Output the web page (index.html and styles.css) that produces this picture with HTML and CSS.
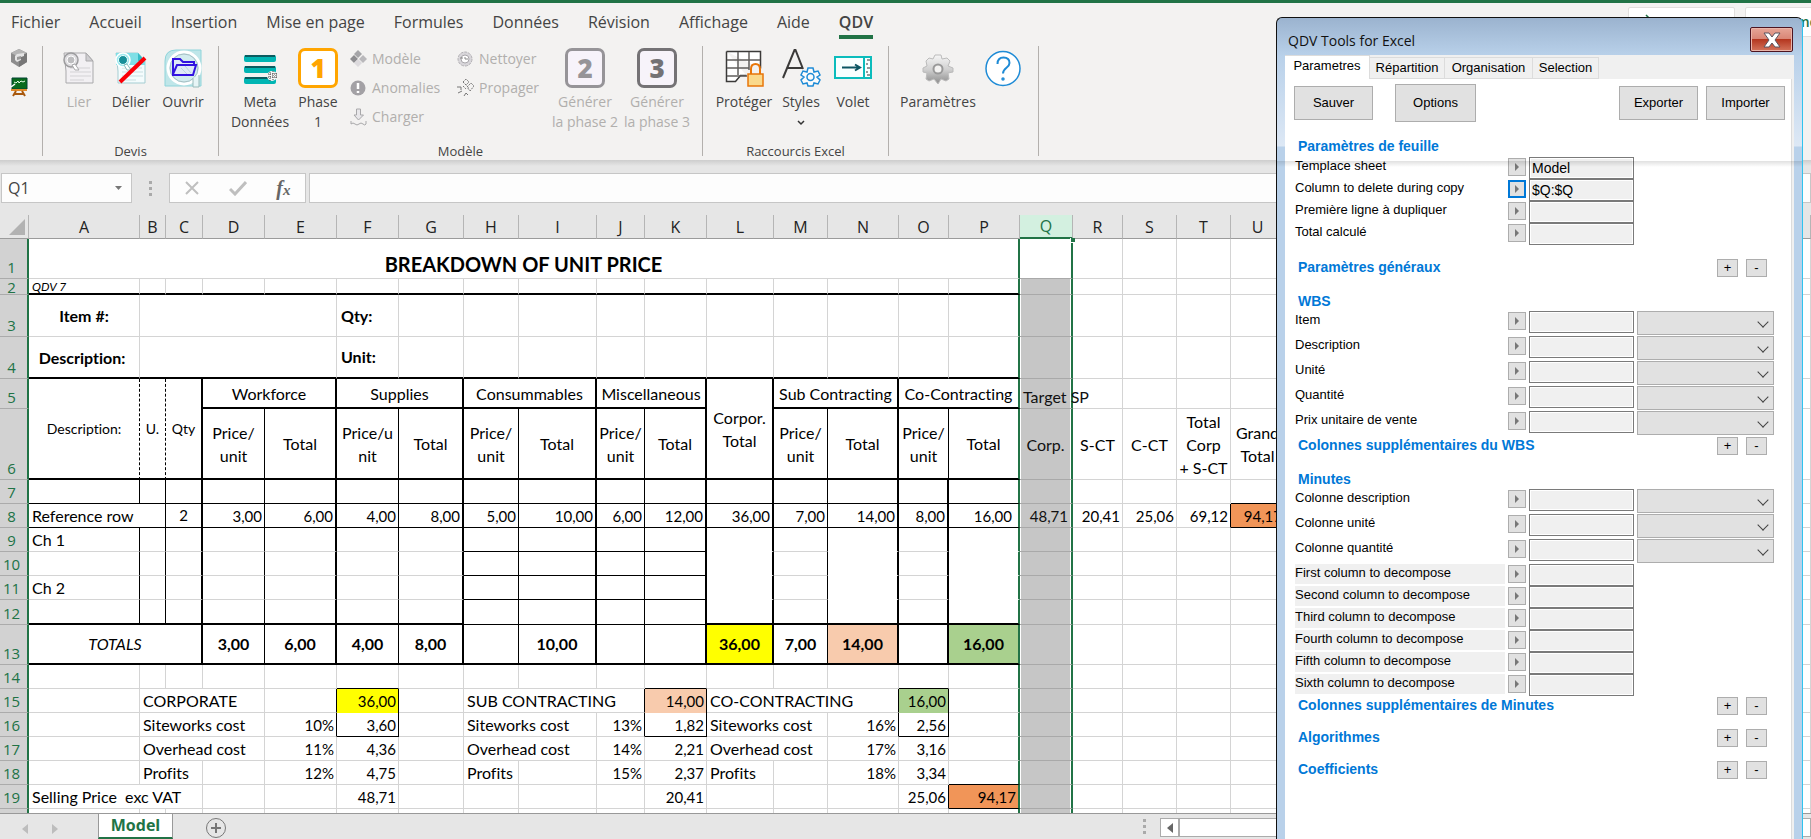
FILE: index.html
```html
<!DOCTYPE html>
<html lang="fr">
<head>
<meta charset="utf-8">
<title>QDV Tools for Excel</title>
<link rel="stylesheet" href="styles.css">
</head>
<body>
<header class="ribbon">
  <div class="ribbon-top">
    <nav class="tabs">
      <a href="#">Fichier</a><a href="#">Accueil</a><a href="#">Insertion</a><a href="#">Mise en page</a><a href="#">Formules</a><a href="#">Données</a><a href="#">Révision</a><a href="#">Affichage</a><a href="#">Aide</a><a href="#" class="current">QDV</a>
    </nav>
    <div class="share">
      <button type="button"><svg width="16" height="16" viewBox="0 0 16 16" fill="none" stroke="#217346" stroke-width="1.5"><path d="M2 6v8h12V9M4 10c0-4 3-5 7-5M8 1l4 4-4 4"/></svg>Partager</button>
      <button type="button"><svg width="16" height="16" viewBox="0 0 16 16" fill="none" stroke="#217346" stroke-width="1.5"><path d="M1 2h13v9H7l-3 3v-3H1z"/></svg>Commentaires</button>
    </div>
  </div>
  <div class="groups">
    <section class="group mini">
      <button type="button" aria-label="Cube"><svg width="18" height="20" viewBox="0 0 18 20"><path d="M9 1l8 4v9l-8 5-8-5V5z" fill="#8d8d8d"/><path d="M9 1l8 4-8 4-8-4z" fill="#b5b5b5"/><path d="M9 9l8-4v9l-8 5z" fill="#777"/><path d="M7 6l7-1v3l-3 1v3l-4 2-2-2V8z" fill="#e4e4e4"/><path d="M7 9l4-1v3l-4 1z" fill="#999"/></svg></button>
      <button type="button" aria-label="Tableau"><svg width="18" height="20" viewBox="0 0 18 20"><path d="M2 1h15v11H2z" fill="#0a6b1c" stroke="#043"/><path d="M4 5l2 1 2-2 1 2 2-2 2 1 2-1" stroke="#e8ffe8" fill="none"/><path d="M1 13h16" stroke="#e08a2b" stroke-width="2"/><path d="M6 14l-3 5M12 14l3 5M5 17h8" stroke="#a8590f" stroke-width="2"/><path d="M1 10l4-3" stroke="#fff" stroke-width="1.5"/></svg></button>
    </section>
    <section class="group devis">
      <div class="row">
        <button type="button" class="big w52 off"><svg width="32" height="34" viewBox="0 0 32 34"><path d="M1 2h22l7 8v22H3V20z" fill="#f2f0f3" stroke="#a9a9ab"/><path d="M23 2l7 8h-7z" fill="#cfced1" stroke="#a9a9ab"/><path d="M7 17h20M7 21h21M7 25h21M7 29h14" stroke="#d3d2d5"/><circle cx="8" cy="9" r="7" fill="#dddcdf" stroke="#9c9c9e" stroke-width="1.5"/><circle cx="8" cy="9" r="4" fill="#bdbdbf" stroke="#fff"/><path d="M9 14l3 5h4l-4-6z" fill="#fff" stroke="#a9a9ab"/></svg>Lier</button>
        <button type="button" class="big w52"><svg width="32" height="34" viewBox="0 0 32 34"><path d="M1 2h22l7 8v22H3V20z" fill="#f4fcfd" stroke="#a5cdd2"/><path d="M1 2h22l7 8v4H1z" fill="#7fdfe6"/><path d="M23 2l7 8h-7z" fill="#35bcc6"/><path d="M7 17h20M7 21h21M7 25h21M7 29h14" stroke="#c9dfe2"/><circle cx="8" cy="9" r="7" fill="#9eeaf0" stroke="#fff" stroke-width="1.5"/><circle cx="8" cy="9" r="4.500" fill="#178f99" stroke="#e8ffff"/><path d="M9 14l3 5h4l-4-6z" fill="#fff" stroke="#8bb"/><path d="M5 31L30 7" stroke="#fb0007" stroke-width="4"/></svg>Délier</button>
        <button type="button" class="big w52"><svg width="38" height="38" viewBox="0 0 38 38"><path d="M1 12Q1 1 12 1h25v36H1z" fill="#bfe6e9" stroke="#8fd4da"/><circle cx="20" cy="19" r="16" fill="none" stroke="#fff" stroke-width="3"/><circle cx="20" cy="19" r="14" fill="#d3ecef" stroke="#a7bfc3"/><path d="M29 29v9h6v-12" fill="#e6f5f6" stroke="#9bb"/><path d="M9 25V10h7l3 3h11v4M9 25l4-9h19l-3 10H9z" fill="#dfe9f8" stroke="#3213e0" stroke-width="2"/><path d="M17 19l6 6M21 17l6 7" stroke="#b9d8dc"/></svg>Ouvrir</button>
      </div>
      <h2>Devis</h2>
    </section>
    <section class="group modele">
      <div class="row">
        <button type="button" class="big w64"><svg width="36" height="34" viewBox="0 0 36 34"><g fill="#00b5b3"><rect x="2" y="4" width="32" height="7" rx="2"/><rect x="2" y="15" width="32" height="7" rx="2"/><rect x="2" y="26" width="32" height="7" rx="2"/></g><path d="M3 5h30M3 16h30M3 27h30" stroke="#0a5c60" stroke-width="2"/><circle cx="30" cy="25" r="5" fill="#f6f6f6"/><path d="M26 23h9M26 26h9M28 21v9M31 20v10M34 22v6" stroke="#444" stroke-dasharray="1 1"/></svg>Meta<br>Données</button>
        <button type="button" class="big w52"><span class="num n1">1</span>Phase<br>1</button>
        <div class="smalls c1">
          <button type="button"><svg width="17" height="18" viewBox="0 0 17 18"><path d="M8 0l4 4-4 4-4-4z" fill="#a5a5a8"/><path d="M4 5l4 4-4 4-4-4z" fill="#8d8d90"/><path d="M13 5l4 4-4 4-4-4z" fill="#b9b8bb"/><path d="M8 9l4 4-4 4-4-4z" fill="#dcdadd"/></svg>Modèle</button>
          <button type="button"><svg width="17" height="18" viewBox="0 0 17 18"><circle cx="8" cy="9" r="7.500" fill="#a3a1a5"/><path d="M8 4v6M8 12v2" stroke="#fff" stroke-width="2.500"/></svg>Anomalies</button>
          <button type="button"><svg width="17" height="18" viewBox="0 0 17 18" fill="none" stroke="#a8a8aa"><path d="M6.500 1h4v6h3L8.500 12 4 7h2.500z" fill="#e8e7ea"/><path d="M1 13v3q2-2 4 0t4 0 4 0 3 0v-3"/></svg>Charger</button>
        </div>
        <div class="smalls c2">
          <button type="button"><svg width="17" height="18" viewBox="0 0 17 18"><circle cx="8" cy="9" r="7" fill="#d8d6da" stroke="#b3b1b5" stroke-dasharray="3 1"/><circle cx="8" cy="9" r="4" fill="#fff" stroke="#a9a7ab"/><path d="M8 7v2h3M3 8h3" stroke="#888" fill="none"/></svg>Nettoyer</button>
          <button type="button"><svg width="17" height="18" viewBox="0 0 17 18" stroke="#777" fill="none"><path d="M6 3l3-3 3 3-3 3zM10 8l4-4 3 3-4 5zM6 7l3 3M8 5l4 4" stroke-dasharray="2 1"/><path d="M0 8h4v3M1 14l4-2M7 17l2-3 2 2"/></svg>Propager</button>
        </div>
        <button type="button" class="big w72 off"><span class="num n2">2</span>Générer<br>la phase 2</button>
        <button type="button" class="big w72 off"><span class="num n3">3</span>Générer<br>la phase 3</button>
      </div>
      <h2>Modèle</h2>
    </section>
    <section class="group raccourcis">
      <div class="row">
        <button type="button" class="big w64"><svg width="40" height="38" viewBox="0 0 40 38"><path d="M2.500 2.500h34v17M2.500 2.500v30h9l5-6h6" fill="#fff" stroke="#3b3a39" stroke-width="1.500"/><path d="M3 11h33M3 19h22M3 27h20M14 3v23M25 3v18" stroke="#605e5c" stroke-width="1.500"/><path d="M27 26v-6q0-5 4.500-5t4.500 5v6" fill="#f3f2f1" stroke="#e8760a" stroke-width="2"/><rect x="24" y="25" width="15" height="12" fill="#fad98b" stroke="#e8760a" stroke-width="1.500"/></svg>Protéger</button>
        <button type="button" class="big w50"><svg width="40" height="38" viewBox="0 0 40 38" fill="none"><path d="M2 29L13.500 1h1L22 20M6 19h15" stroke="#3b3a39" stroke-width="2"/><path d="M27 19h5l1 4 4-1 2 4-3 2 3 3-2 4-4-1-1 3h-5l-1-3-4 1-2-4 3-3-3-2 2-4 4 1z" fill="#fbfbfb" stroke="#1e8bd6" stroke-width="1.500"/><circle cx="29.500" cy="28" r="3.500" stroke="#1e8bd6" stroke-width="1.500"/></svg>Styles<br><svg width="10" height="8" viewBox="0 0 10 8" fill="none"><path d="M2 2l3 3 3-3" stroke="#333" stroke-width="1.500"/></svg></button>
        <button type="button" class="big w54"><svg width="38" height="38" viewBox="0 0 38 38" fill="none"><path d="M1 8h36v21H1z" fill="#f8ffff" stroke="#0bbcbc" stroke-width="2"/><path d="M30 8v21" stroke="#0bbcbc" stroke-width="2"/><path d="M8 18.500h17M21 15.500l5 3-5 3" stroke="#0b5563" stroke-width="2"/><path d="M33 11h3M32 15h2M33 19h3M32 23h2M33 26h3" stroke="#333"/></svg>Volet</button>
      </div>
      <h2>Raccourcis Excel</h2>
    </section>
    <section class="group params">
      <div class="row">
        <button type="button" class="big w90"><svg width="34" height="38" viewBox="0 0 34 38"><defs><linearGradient id="metal" x1="0" y1="0" x2="0" y2="1"><stop offset="0" stop-color="#f6f6f6"/><stop offset="0.5" stop-color="#d0d0d0"/><stop offset="1" stop-color="#8b8b8b"/></linearGradient></defs><path d="M14 6h6l1 4 5-1 3 3-2 5 5 2v4l-5 1 1 6-3 2-5-2-3 5-4-5-5 2-3-2 1-6-4-1v-4l4-2-1-5 3-3 4 1z" fill="url(#metal)" stroke="#bbb"/><circle cx="17" cy="20" r="4.500" fill="#f3f2f1" stroke="#999" stroke-width="2"/></svg>Paramètres</button>
        <button type="button" class="big w40" aria-label="Aide"><svg width="38" height="38" viewBox="0 0 38 38" fill="none" stroke="#1e8bd6"><circle cx="19" cy="19.500" r="17" fill="#fff" stroke-width="1.500"/><path d="M13.500 15q0-6.500 6-6.500t6 5.500c0 5-6.500 4.500-6.500 10.500" stroke-width="2"/><circle cx="19" cy="30" r="1" stroke-width="1.500"/></svg></button>
      </div>
    </section>
  </div>
</header>

<div class="formula-bar">
  <label class="name-box"><input type="text" value="Q1" aria-label="Zone Nom"><svg width="9" height="6" viewBox="0 0 9 6"><path d="M1 1h7L4.500 5z" fill="#777"/></svg></label>
  <span class="grip"><i></i><i></i><i></i></span>
  <div class="fx">
    <button type="button" aria-label="Annuler"><svg width="16" height="16" viewBox="0 0 16 16" stroke="#bfbfbf" stroke-width="2" fill="none"><path d="M2 2l12 12M14 2L2 14"/></svg></button>
    <button type="button" aria-label="Entrer"><svg width="18" height="16" viewBox="0 0 18 16" stroke="#bfbfbf" stroke-width="3" fill="none"><path d="M1 9l5 5L17 2"/></svg></button>
    <button type="button" class="fxb"><i>f</i><sub>x</sub></button>
  </div>
  <input class="formula" type="text" aria-label="Barre de formule">
</div>

<main class="sheet">
<table>
<colgroup><col class="c29"><col class="ca"><col class="cb"><col class="cc"><col class="cd"><col class="ce"><col class="cd"><col class="cg"><col class="ch"><col class="ci"><col class="cj"><col class="cd"><col class="cl"><col class="cm"><col class="cn"><col class="co"><col class="cn"><col class="cq"><col class="cr"><col class="cm"><col class="cm"><col class="cm"><col></colgroup>
<thead><tr><th class="corner"><svg width="16" height="16" viewBox="0 0 16 16"><path d="M16 0v16H0z" fill="#b2b2b2"/></svg></th><th>A</th><th>B</th><th>C</th><th>D</th><th>E</th><th>F</th><th>G</th><th>H</th><th>I</th><th>J</th><th>K</th><th>L</th><th>M</th><th>N</th><th>O</th><th>P</th><th class="sel">Q</th><th>R</th><th>S</th><th>T</th><th>U</th><th></th></tr></thead>
<tbody>
<tr class="h40"><th>1</th><td colspan="16" class="title">BREAKDOWN OF UNIT PRICE</td><td class="active"><span class="handle"></span></td><td></td><td></td><td></td><td></td><td></td></tr>
<tr class="h16 rule2"><th>2</th><td class="version">QDV 7</td><td></td><td></td><td></td><td></td><td></td><td></td><td></td><td></td><td></td><td></td><td></td><td></td><td></td><td></td><td></td><td></td><td></td><td></td><td></td><td></td><td></td></tr>
<tr class="h42"><th>3</th><td class="c b">Item #:</td><td colspan="4"></td><td class="b mid">Qty:</td><td></td><td></td><td></td><td></td><td></td><td></td><td></td><td></td><td></td><td></td><td></td><td></td><td></td><td></td><td></td><td></td></tr>
<tr class="h42 rule2"><th>4</th><td class="c b pull">Description:</td><td colspan="4"></td><td class="b mid">Unit:</td><td></td><td></td><td></td><td></td><td></td><td></td><td></td><td></td><td></td><td></td><td></td><td></td><td></td><td></td><td></td><td></td></tr>
<tr class="h30 rule2"><th>5</th><td rowspan="2" class="c small dash">Description:</td><td rowspan="2" class="c small dash">U.</td><td rowspan="2" class="c small r2">Qty</td><td colspan="2" class="c r2">Workforce</td><td colspan="2" class="c r2">Supplies</td><td colspan="2" class="c r2">Consummables</td><td colspan="2" class="c r2">Miscellaneous</td><td rowspan="2" class="c r2">Corpor.<br>Total</td><td colspan="2" class="c r2">Sub Contracting</td><td colspan="2" class="c">Co-Contracting</td><td>Target SP</td><td></td><td></td><td></td><td></td><td></td></tr>
<tr class="h71 rule2"><th>6</th><td class="c r1">Price/<br>unit</td><td class="c r2">Total</td><td class="c r1">Price/u<br>nit</td><td class="c r2">Total</td><td class="c r1">Price/<br>unit</td><td class="c r2">Total</td><td class="c r1">Price/<br>unit</td><td class="c r2">Total</td><td class="c r1">Price/<br>unit</td><td class="c r2">Total</td><td class="c r1">Price/<br>unit</td><td class="c">Total</td><td class="c">Corp.</td><td class="c">S-CT</td><td class="c">C-CT</td><td class="c">Total<br>Corp<br>+ S-CT</td><td class="c">Grand<br>Total</td><td></td></tr>
<tr class="grid rule1"><th>7</th><td></td><td></td><td></td><td></td><td></td><td></td><td></td><td></td><td></td><td></td><td></td><td></td><td></td><td></td><td></td><td></td><td></td><td></td><td></td><td></td><td class="b1"></td><td></td></tr>
<tr class="grid rule1 nums"><th>8</th><td colspan="2" class="l r1">Reference row</td><td class="c">2</td><td>3,00</td><td>6,00</td><td>4,00</td><td>8,00</td><td>5,00</td><td>10,00</td><td>6,00</td><td>12,00</td><td>36,00</td><td>7,00</td><td>14,00</td><td>8,00</td><td class="indent">16,00</td><td>48,71</td><td>20,41</td><td>25,06</td><td class="r1">69,12</td><td class="orange b1">94,17</td><td></td></tr>
<tr class="grid open"><th>9</th><td>Ch 1</td><td></td><td></td><td></td><td></td><td></td><td></td><td></td><td></td><td></td><td></td><td></td><td></td><td></td><td></td><td></td><td></td><td></td><td></td><td></td><td></td><td></td></tr>
<tr class="grid open"><th>10</th><td></td><td></td><td></td><td></td><td></td><td></td><td></td><td></td><td></td><td></td><td></td><td></td><td></td><td></td><td></td><td></td><td></td><td></td><td></td><td></td><td></td><td></td></tr>
<tr class="grid open"><th>11</th><td>Ch 2</td><td></td><td></td><td></td><td></td><td></td><td></td><td></td><td></td><td></td><td></td><td></td><td></td><td></td><td></td><td></td><td></td><td></td><td></td><td></td><td></td><td></td></tr>
<tr class="grid rule2 h25"><th>12</th><td></td><td></td><td></td><td></td><td></td><td></td><td></td><td class="b1"></td><td class="b1"></td><td class="b1"></td><td class="b1"></td><td></td><td></td><td></td><td></td><td></td><td></td><td></td><td></td><td></td><td></td><td></td></tr>
<tr class="grid rule2 h40 totals"><th>13</th><td colspan="3" class="r2"><em>TOTALS</em></td><td>3,00</td><td>6,00</td><td>4,00</td><td>8,00</td><td></td><td>10,00</td><td></td><td></td><td class="yellow">36,00</td><td>7,00</td><td class="peach">14,00</td><td></td><td class="green">16,00</td><td></td><td></td><td></td><td></td><td></td><td></td></tr>
<tr><th>14</th><td></td><td></td><td></td><td></td><td></td><td class="b1"></td><td></td><td></td><td></td><td></td><td class="b1"></td><td></td><td></td><td></td><td class="b1"></td><td></td><td></td><td></td><td></td><td></td><td></td><td></td></tr>
<tr class="nums"><th>15</th><td></td><td colspan="3" class="l">CORPORATE</td><td class="r1"></td><td class="yellow box">36,00</td><td></td><td colspan="3" class="l r1">SUB CONTRACTING</td><td class="peach box">14,00</td><td colspan="3" class="l r1">CO-CONTRACTING</td><td class="green box">16,00</td><td></td><td></td><td></td><td></td><td></td><td></td><td></td></tr>
<tr class="nums"><th>16</th><td></td><td colspan="3" class="l">Siteworks cost</td><td class="r1">10%</td><td class="r1 b1">3,60</td><td></td><td colspan="2" class="l">Siteworks cost</td><td class="r1">13%</td><td class="r1 b1">1,82</td><td colspan="2" class="l">Siteworks cost</td><td class="r1">16%</td><td class="r1 b1">2,56</td><td></td><td></td><td></td><td></td><td></td><td></td><td></td></tr>
<tr class="nums"><th>17</th><td></td><td colspan="3" class="l">Overhead cost</td><td>11%</td><td>4,36</td><td></td><td colspan="2" class="l">Overhead cost</td><td>14%</td><td>2,21</td><td colspan="2" class="l">Overhead cost</td><td>17%</td><td>3,16</td><td></td><td></td><td></td><td></td><td></td><td></td><td></td></tr>
<tr class="nums"><th>18</th><td></td><td colspan="2" class="l">Profits</td><td></td><td>12%</td><td>4,75</td><td></td><td class="l">Profits</td><td></td><td>15%</td><td>2,37</td><td class="l">Profits</td><td></td><td>18%</td><td>3,34</td><td class="b1"></td><td></td><td></td><td></td><td></td><td></td><td></td></tr>
<tr class="nums"><th>19</th><td colspan="3" class="l pre">Selling Price  exc VAT</td><td></td><td></td><td>48,71</td><td></td><td></td><td></td><td></td><td>20,41</td><td></td><td></td><td></td><td class="r1">25,06</td><td class="orange b1">94,17</td><td></td><td></td><td></td><td></td><td></td><td></td></tr>
<tr><th></th><td></td><td></td><td></td><td></td><td></td><td></td><td></td><td></td><td></td><td></td><td></td><td></td><td></td><td></td><td></td><td></td><td></td><td></td><td></td><td></td><td></td><td></td></tr>
</tbody>
</table>
</main>

<footer class="sheet-tabs">
  <button type="button" class="nav" aria-label="Précédent"><svg width="6" height="10" viewBox="0 0 6 10"><path d="M6 0v10L0 5z" fill="#bdbdbd"/></svg></button>
  <button type="button" class="nav" aria-label="Suivant"><svg width="6" height="10" viewBox="0 0 6 10"><path d="M0 0v10l6-5z" fill="#bdbdbd"/></svg></button>
  <button type="button" class="tab">Model</button>
  <button type="button" class="add" aria-label="Nouvelle feuille"><svg width="22" height="22" viewBox="0 0 22 22" fill="none" stroke="#777"><circle cx="11" cy="11" r="9.500"/><path d="M11 6v10M6 11h10" stroke-width="2"/></svg></button>
  <span class="grip"><i></i><i></i><i></i></span>
  <div class="scroll"><button type="button" aria-label="Défiler à gauche"><svg width="6" height="10" viewBox="0 0 6 10"><path d="M6 0v10L0 5z" fill="#666"/></svg></button></div>
</footer>

<aside class="dialog">
  <div class="caption"><h1>QDV Tools for Excel</h1><button type="button" aria-label="Fermer"><svg width="18" height="16" viewBox="0 0 18 16"><path d="M1 1h5l3 4 3-4h5l-5 7 5 7h-5l-3-4-3 4H1l5-7z" fill="#fff" stroke="#5a5560"/></svg></button></div>
  <div class="client">
    <div class="dtabs"><button type="button" class="on">Parametres</button><button type="button">Répartition</button><button type="button">Organisation</button><button type="button">Selection</button></div>
    <form class="page">
      <div class="actions"><button type="button">Sauver</button><button type="button" class="large">Options</button><span class="fill"></span><button type="button">Exporter</button><button type="button">Importer</button></div>

      <div class="head first"><h3>Paramètres de feuille</h3></div>
      <div class="line"><label for="f1">Templace sheet</label><button type="button" aria-label="Choisir"></button><input id="f1" type="text" value="Model"></div>
      <div class="line"><label for="f2">Column to delete during copy</label><button type="button" class="focus" aria-label="Choisir"></button><input id="f2" type="text" value="$Q:$Q"></div>
      <div class="line"><label for="f3">Première ligne à dupliquer</label><button type="button" aria-label="Choisir"></button><input id="f3" type="text"></div>
      <div class="line"><label for="f4">Total calculé</label><button type="button" aria-label="Choisir"></button><input id="f4" type="text"></div>

      <div class="head gap14"><h3>Paramètres généraux</h3><button type="button">+</button><button type="button">-</button></div>

      <div class="head gap16"><h3>WBS</h3></div>
      <div class="line tall"><label for="w1">Item</label><button type="button" aria-label="Choisir"></button><input id="w1" type="text"><span class="pick"><select aria-label="Item"></select></span></div>
      <div class="line tall"><label for="w2">Description</label><button type="button" aria-label="Choisir"></button><input id="w2" type="text"><span class="pick"><select aria-label="Description"></select></span></div>
      <div class="line tall"><label for="w3">Unité</label><button type="button" aria-label="Choisir"></button><input id="w3" type="text"><span class="pick"><select aria-label="Unité"></select></span></div>
      <div class="line tall"><label for="w4">Quantité</label><button type="button" aria-label="Choisir"></button><input id="w4" type="text"><span class="pick"><select aria-label="Quantité"></select></span></div>
      <div class="line tall"><label for="w5">Prix unitaire de vente</label><button type="button" aria-label="Choisir"></button><input id="w5" type="text"><span class="pick"><select aria-label="Prix unitaire de vente"></select></span></div>
      <div class="head"><h3>Colonnes supplémentaires du WBS</h3><button type="button">+</button><button type="button">-</button></div>

      <div class="head gap16"><h3>Minutes</h3></div>
      <div class="line tall"><label for="m1">Colonne description</label><button type="button" aria-label="Choisir"></button><input id="m1" type="text"><span class="pick"><select aria-label="Colonne description"></select></span></div>
      <div class="line tall"><label for="m2">Colonne unité</label><button type="button" aria-label="Choisir"></button><input id="m2" type="text"><span class="pick"><select aria-label="Colonne unité"></select></span></div>
      <div class="line tall"><label for="m3">Colonne quantité</label><button type="button" aria-label="Choisir"></button><input id="m3" type="text"><span class="pick"><select aria-label="Colonne quantité"></select></span></div>
      <div class="line shade"><label for="d1">First column to decompose</label><button type="button" aria-label="Choisir"></button><input id="d1" type="text"></div>
      <div class="line shade"><label for="d2">Second column to decompose</label><button type="button" aria-label="Choisir"></button><input id="d2" type="text"></div>
      <div class="line shade"><label for="d3">Third column to decompose</label><button type="button" aria-label="Choisir"></button><input id="d3" type="text"></div>
      <div class="line shade"><label for="d4">Fourth column to decompose</label><button type="button" aria-label="Choisir"></button><input id="d4" type="text"></div>
      <div class="line shade"><label for="d5">Fifth column to decompose</label><button type="button" aria-label="Choisir"></button><input id="d5" type="text"></div>
      <div class="line shade"><label for="d6">Sixth column to decompose</label><button type="button" aria-label="Choisir"></button><input id="d6" type="text"></div>
      <div class="head"><h3>Colonnes supplémentaires de Minutes</h3><button type="button">+</button><button type="button">-</button></div>
      <div class="head gap14"><h3>Algorithmes</h3><button type="button">+</button><button type="button">-</button></div>
      <div class="head gap14"><h3>Coefficients</h3><button type="button">+</button><button type="button">-</button></div>
    </form>
  </div>
  <div class="veil"></div>
</aside>
</body>
</html>
```
FILE: styles.css
```css
* { box-sizing: border-box; }
body {
  margin: 0;
  min-height: 100vh;
  height: 100vh;
  display: flex;
  flex-direction: column;
  position: relative;
  overflow: hidden;
  background: #e6e6e6;
  color: #444;
  font: 16px/20px "Open Sans", "Noto Sans", sans-serif;
}
button, input, select { font: inherit; color: inherit; margin: 0; border-radius: 0; }
button { padding: 0; border: 0; background: none; }
h1, h2, h3 { margin: 0; font-weight: normal; }

/* Ribbon */
.ribbon { border-top: 3px solid #217346; background: #f3f2f1; height: 160px; flex: none; }
.ribbon-top { display: flex; justify-content: space-between; height: 43px; overflow: hidden; }
.tabs { display: flex; gap: 29px; padding: 9px 0 0 11px; }
.tabs a { color: #444; text-decoration: none; height: 27px; white-space: nowrap; }
.tabs .current { font-weight: 600; border-bottom: 4px solid #217346; }
.share { display: flex; gap: 10px; padding-top: 4px; margin-right: -64px; }
.share button {
  display: flex; align-items: center; gap: 8px; width: 130px; height: 30px; padding: 0 9px;
  background: #fff; border: 1px solid #e1dfdd; border-radius: 2px; color: #217346; font-weight: 600; font-size: 14px;
}
.share button:first-child { width: 107px; }
.groups { display: flex; height: 110px; font-size: 14px; line-height: 20px; }
.group { display: flex; flex-direction: column; justify-content: space-between; border-right: 1px solid #b3b0ad; }
.group h2 { text-align: center; font-size: 13px; line-height: 10px; }
.row { display: flex; }
.mini { width: 43px; padding: 2px 0 0 10px; justify-content: flex-start; gap: 9px; align-items: flex-start; }
.mini svg { display: block; }
.devis { width: 176px; padding-left: 10px; }
.devis h2 { margin-left: -10px; }
.modele { width: 484px; padding-left: 9px; }
.modele h2 { margin-left: -9px; }
.raccourcis { width: 186px; padding-left: 9px; }
.raccourcis h2 { margin-left: -9px; }
.params { width: 150px; padding-left: 4px; }
.big { line-height: 20px; text-align: center; white-space: nowrap; padding-top: 2px; align-self: flex-start; }
.big > svg:first-child, .num { display: block; margin: 0 auto 4px; height: 40px; }
.big br + svg { display: inline-block; }
.off { color: #b1afad; }
.w40 { width: 40px; } .w50 { width: 50px; } .w52 { width: 52px; } .w54 { width: 54px; }
.w64 { width: 64px; } .w72 { width: 72px; } .w90 { width: 90px; }
.num {
  width: 40px; border: 3px solid; border-radius: 7px; background: #f7f3fa;
  font-size: 26px; line-height: 34px; font-weight: 800;
}
.n1 { color: #ffa500; background: #fff; }
.n2 { color: #969498; }
.n3 { color: #747275; }
.smalls { display: flex; flex-direction: column; gap: 9px; padding: 3px 0 0 6px; color: #b1afad; }
.smalls button { display: flex; align-items: center; gap: 5px; height: 20px; }
.c1 { width: 107px; }
.c2 { width: 98px; }

/* Formula bar */
.formula-bar {
  display: flex; flex: none; height: 55px; padding: 13px 0 12px 1px;
  background: linear-gradient(#cdcdcd, #e6e6e6 6px);
}
.name-box { display: flex; align-items: center; width: 131px; background: #fdfdfd; border: 1px solid #c6c6c6; padding: 0 8px 0 6px; }
.name-box input { flex: 1; min-width: 0; border: 0; background: none; padding: 0; }
.grip { display: flex; flex-direction: column; justify-content: center; gap: 3px; width: 37px; align-items: center; }
.grip i { width: 3px; height: 3px; background: #aaa; }
.fx { display: flex; align-items: center; justify-content: space-around; width: 137px; background: #fdfdfd; border: 1px solid #c6c6c6; }
.fx svg { display: block; }
.fxb { font: bold 20px/20px "Liberation Serif", serif; color: #666; }
.fxb sub { font-size: 15px; font-style: italic; line-height: 10px; vertical-align: baseline; }
.formula { flex: 1; margin-left: 3px; background: #fdfdfd; border: 1px solid #c6c6c6; }

/* Worksheet */
.sheet { flex: 1; min-height: 0; overflow: hidden; background: #fff; color: #000; }
table { table-layout: fixed; width: 100%; border-collapse: separate; border-spacing: 0; font: 16px/24px Lato, sans-serif; font-variant-ligatures: none; }
.c29 { width: 29px; } .ca { width: 111px; } .cb { width: 26px; } .cc { width: 37px; } .cd { width: 62px; }
.ce { width: 72px; } .cg { width: 65px; } .ch { width: 55px; } .ci { width: 78px; } .cj { width: 48px; }
.cl { width: 67px; } .cm { width: 54px; } .cn { width: 71px; } .co { width: 50px; } .cq { width: 53px; } .cr { width: 50px; }
thead th {
  height: 24px; padding: 0; background: #e6e6e6; border-bottom: 1px solid #9b9b9b; border-right: 1px solid #b5b5b5;
  font: 16px/20px "Open Sans", sans-serif; color: #222;
}
thead .sel { background: #d3f0e0; color: #217346; border-bottom: 2px solid #217346; }
.corner svg { display: block; margin: 0 0 0 9px; }
tbody th {
  padding: 0 4px 0 0; vertical-align: bottom; background: #d2d2d2; color: #217346;
  border-right: 2px solid #217346; border-bottom: 1px solid #ababab; font: 15px/22px "Open Sans", sans-serif;
}
td {
  height: 24px; padding: 0 3px; white-space: nowrap; vertical-align: bottom; line-height: 22px;
  border-right: 1px solid #d4d4d4; border-bottom: 1px solid #d4d4d4;
}
.h16 td { height: 16px; } .h25 td { height: 25px; } .h30 td { height: 30px; } .h40 td { height: 40px; }
.h42 td { height: 42px; } .h71 td { height: 71px; }
.h16 th { line-height: 14px; }
.rule1 td:not(:nth-last-child(-n+6)) { border-bottom-color: #000; }
.rule2 td:not(:nth-last-child(-n+6)) { border-bottom: 2px solid #000; }
td.c { text-align: center; vertical-align: middle; line-height: 23px; padding: 0; }
td.title { text-align: center; font-size: 20px; font-weight: bold; padding-bottom: 3px; }
td.version { font-size: 12px; line-height: 12px; font-style: italic; }
td.small { font-size: 14px; }
.b { font-weight: bold; }
td.mid { vertical-align: middle; padding-left: 4px; }
td.pull { padding-right: 4px; }
td.dash { border-right: 1px dashed #000; }
td.r1 { border-right: 1px solid #000; }
td.r2 { border-right: 2px solid #000; }
.nums td { text-align: right; font-size: 15px; padding: 0 2px; }
.nums td.l { text-align: left; font-size: 16px; padding: 0 3px; }
.nums td.c { text-align: center; }
.pre { white-space: pre; }
.nums td.indent { padding-right: 6px; }
.grid td:not(:nth-last-child(-n+6)) { border-right: 1px solid #000; }
.grid td:nth-last-child(9), .grid td:nth-last-child(8), .grid td:nth-last-child(11), .grid td:nth-last-child(12),
.grid td:nth-last-child(14), .grid td:nth-last-child(16), .grid td:nth-last-child(18), .grid td:nth-last-child(20) { border-right: 2px solid #000 !important; }
.open td:nth-last-child(n+12):nth-last-child(-n+15) { border-bottom-color: #000; }
.open td:nth-last-child(7), .open td:nth-last-child(9), .open td:nth-last-child(11) { border-bottom-color: #fff; }
.totals td { text-align: center; vertical-align: middle; font-weight: bold; }
.totals em { font-weight: normal; }
td.b1, .rule2 td.b1:not(:nth-last-child(-n+6)) { border-bottom: 1px solid #000; }
.yellow { background: #ff0; }
.peach { background: #f8cbad; }
.green { background: #a9d08e; }
.orange { background: #f19558; }
.nums td.box { border-right: 1px solid #000; border-bottom-width: 0; padding-bottom: 1px; }
tbody td:nth-last-child(7), .grid td:nth-last-child(7):not(:nth-last-child(-n+6)) { border-right: 2px solid #217346; }
tbody td:nth-last-child(6) {
  background: #c6c6c6; border-right: 2px solid #217346; border-bottom-color: #a9a9a9;
  box-shadow: inset 1px 0 #fff, inset -1px 0 #fff; color: #111; padding: 0 3px;
}
tbody td.active:nth-last-child(6) { background: #fff; position: relative; }
.handle { position: absolute; top: -1px; right: -4px; width: 5px; height: 5px; background: #217346; border-left: 1px solid #fff; border-bottom: 1px solid #fff; }

/* Sheet tabs */
.sheet-tabs { display: flex; flex: none; height: 26px; border-top: 1px solid #999; background: #e6e6e6; }
.nav { width: 30px; padding-left: 20px; margin-top: 3px; }
.nav + .tab { margin-left: 38px; }
.tab { width: 75px; height: 25px; background: #fff; border: 1px solid #999; border-width: 0 1px 2px; border-bottom-color: #217346; color: #217346; font-weight: bold; line-height: 20px; padding-bottom: 2px; }
.add { margin-left: 32px; padding-top: 3px; }
.add svg { display: block; }
.sheet-tabs > .grip { margin-left: 899px; margin-right: -3px; }
.scroll { flex: 1; height: 19px; margin: 4px 0 0; background: #fff; border: 1px solid #ababab; display: flex; }
.scroll button { width: 19px; border-right: 2px solid #ababab; line-height: 10px; }

/* Tool window */
.dialog {
  position: absolute; top: 17px; right: 8px; bottom: -10px; width: 527px; color: #000;
  display: flex; flex-direction: column; padding: 0 8px 0 8px;
  background: linear-gradient(#9bb3cf, #b9d1ea 38px, #dde8f5 128px, #b9d1ea 129px);
  border: 1px solid #111; border-right-color: #2fc3ee; border-radius: 6px 6px 0 0;
  font: 13px/16px "Liberation Sans", Arial, sans-serif;
}
.caption { display: flex; justify-content: space-between; height: 37px; padding: 9px 1px 0 3px; }
.caption h1 { font: 14px/28px "Open Sans", sans-serif; color: #111; }
.caption button { width: 43px; height: 25px; border: 1px solid #4d1420; border-radius: 2px; background: linear-gradient(#e6a597 0, #d98575 48%, #b53720 50%, #d4745c); box-shadow: inset 0 0 0 1px #eab5aa; }
.caption svg { display: block; margin: 0 auto; }
.client { flex: 1; background: #f0f0f0; display: flex; flex-direction: column; padding-right: 2px; }
.dtabs { display: flex; align-items: flex-end; height: 24px; }
.dtabs button { height: 22px; border: 1px solid #dcdcdc; border-left: 0; padding: 0 3px; width: 88px; line-height: 20px; }
.dtabs button:nth-child(2) { width: 75px; }
.dtabs button:nth-child(4) { width: 66px; }
.dtabs .on { width: 85px; height: 24px; background: #fff; border-bottom: 0; padding-bottom: 3px; }
.page { flex: 1; margin: 0; background: #fff; padding: 5px 17px 0 10px; border-right: 1px solid #dcdcdc; }
.actions { display: flex; height: 38px; gap: 8px; margin: 0 -11px 0 -1px; align-items: center; }
.actions button { width: 79px; height: 34px; border: 1px solid #adadad; background: #e1e1e1; }
.actions .large { width: 81px; height: 38px; margin-left: 14px; }
.fill { flex: 1; }
.head { display: flex; gap: 8px; height: 18px; margin: 1px 7px 0 3px; }
.head h3 { flex: 1; font-size: 14px; font-weight: bold; color: #0078d7; line-height: 16px; }
.head button { width: 21px; height: 18px; border: 1px solid #adadad; background: #e1e1e1; line-height: 14px; }
.head.first { margin-top: 16px; margin-bottom: 1px; }
.head.gap14 { margin-top: 14px; }
.head.gap16 { margin-top: 16px; }
.line { display: grid; grid-template-columns: 1fr 18px 105px 137px; column-gap: 3px; height: 22px; align-items: start; }
.line.tall { height: 25px; }
.line > label { line-height: 18px; }
.line > button { height: 18px; margin-top: 1px; border: 1px solid #adadad; background: #e1e1e1; display: grid; place-items: center; }
.line > button::before { content: ""; border: 4px solid transparent; border-left-color: #777; border-right: 0; }
.line > .focus { border: 2px solid #0078d7; }
.line input { width: 105px; height: 22px; padding: 0 2px; border: 1px solid #7a7a7a; background: #f0f0f0; box-shadow: inset 0 0 0 1px #fff; font-size: 14px; }
.shade label { background: #f0f0f0; height: 20px; }
.pick { position: relative; }
.pick select { appearance: none; display: block; width: 137px; height: 24px; border: 1px solid #adadad; background: #e1e1e1; }
.pick::after {
  content: ""; position: absolute; right: 7px; top: 7px; width: 7px; height: 7px;
  border: solid #444; border-width: 0 1px 1px 0; transform: rotate(45deg); pointer-events: none;
}
.veil { position: absolute; left: 0; right: 0; top: 143px; height: 6px; background: linear-gradient(rgba(0,0,0,.12), transparent); pointer-events: none; }
```
